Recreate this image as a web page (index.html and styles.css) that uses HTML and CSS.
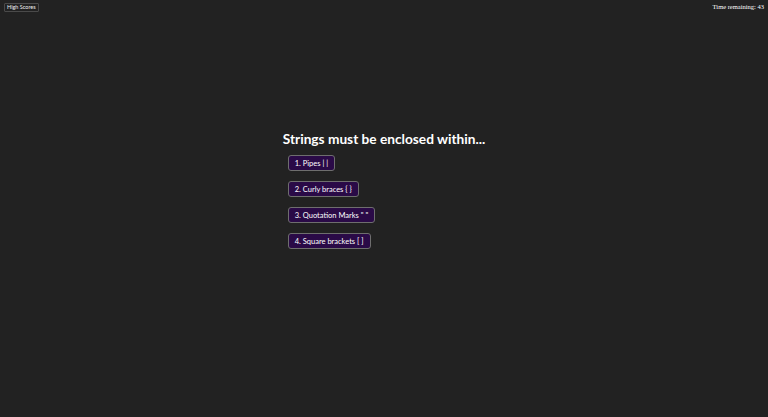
FILE: index.html
```html
<!DOCTYPE html>
<html>
<head>
<meta charset="utf-8">
<link rel="stylesheet" href="styles.css">
</head>
<body>
<header class="topbar">
  <button class="scores-btn">High Scores</button>
  <div class="timer">Time remaining: 43</div>
</header>
<main class="stage">
  <section class="quiz">
    <h1 class="question">Strings must be enclosed within...</h1>
    <div class="answers">
      <button class="answer">1. Pipes | |</button>
      <button class="answer">2. Curly braces { }</button>
      <button class="answer">3. Quotation Marks " "</button>
      <button class="answer">4. Square brackets [ ]</button>
    </div>
  </section>
</main>
</body>
</html>
```
FILE: styles.css
```css
html, body {
  margin: 0;
  padding: 0;
  background: #222222;
  height: 100%;
}
.topbar {
  display: flex;
  justify-content: space-between;
  align-items: flex-start;
  padding: 3px 4px 0 4px;
}
.scores-btn {
  font-family: "Lato", sans-serif;
  font-size: 5.5px;
  line-height: 7px;
  height: 9px;
  padding: 0 2px;
  background: #222222;
  color: #f0f0f0;
  border: 1px solid #4a4a4a;
  border-radius: 1px;
}
.timer {
  font-family: "Liberation Serif", serif;
  font-size: 6.5px;
  line-height: 8px;
  color: #ffffff;
}
.stage {
  display: flex;
  justify-content: center;
  padding-top: 118px;
}
.quiz {
  display: flex;
  flex-direction: column;
}
.question {
  font-family: "Lato", sans-serif;
  font-weight: 700;
  font-size: 13.7px;
  line-height: 18px;
  margin: 0 0 7px 0;
  color: #ffffff;
}
.answers {
  display: flex;
  flex-direction: column;
  align-items: flex-start;
  gap: 10px;
  padding-left: 5px;
}
.answer {
  font-family: "Lato", sans-serif;
  font-size: 7.5px;
  height: 16px;
  padding: 0 6px;
  background: #2a0a47;
  color: #ffffff;
  border: 1px solid #6e6e6e;
  border-radius: 3px;
}
```
